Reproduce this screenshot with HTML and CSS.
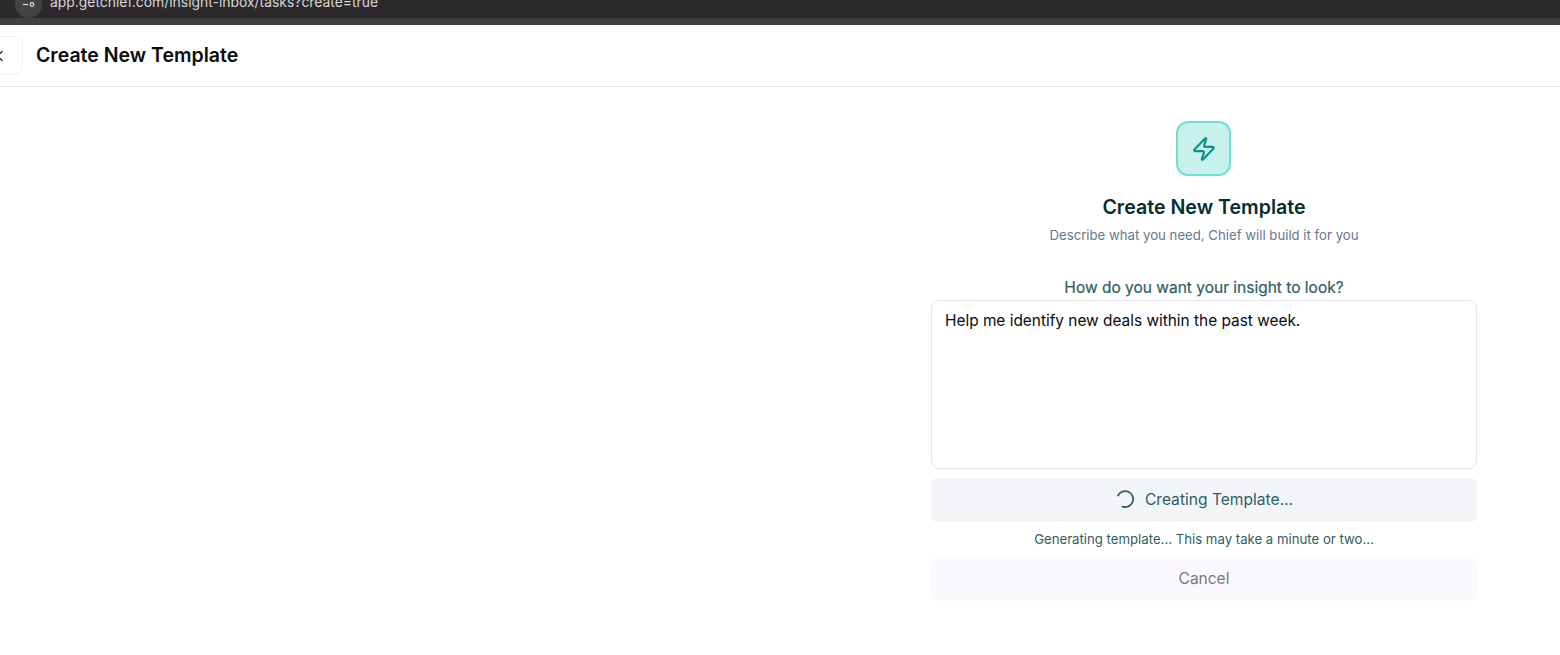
FILE: index.html
```html
<!DOCTYPE html>
<html lang="en">
<head>
    <meta charset="UTF-8">
    <title>Create New Template</title>
    <link rel="stylesheet" href="styles.css">
</head>
<body>

<div class="browser-bar">
    <div class="address-row">
        <div class="site-icon">
            <svg width="14" height="8" viewBox="0 0 14 8" fill="none" stroke="#e4e4e4" stroke-width="1.2">
                <path d="M1 4.500h5"/>
                <circle cx="10" cy="4.500" r="1.800"/>
            </svg>
        </div>
        <span class="address-text">app.getchief.com/insight-inbox/tasks?create=true</span>
    </div>
</div>

<div class="header">
    <button class="back-button">
        <svg width="10" height="12" viewBox="0 0 10 12" fill="none" stroke="#222" stroke-width="1.4" stroke-linecap="round" stroke-linejoin="round">
            <path d="M7 1.500L2.500 6 7 10.500"/>
        </svg>
    </button>
    <h1 class="header-title">Create New Template</h1>
</div>

<div class="main">
    <div class="form-panel">
        <div class="bolt-box">
            <svg width="26" height="26" viewBox="0 0 24 24" fill="none" stroke="#0d9488" stroke-width="2" stroke-linecap="round" stroke-linejoin="round">
                <path d="M4 14a1 1 0 0 1-.78-1.630l9.900-10.200a.500.500 0 0 1 .860.460l-1.920 6.020A1 1 0 0 0 13 10h7a1 1 0 0 1 .780 1.630l-9.900 10.200a.500.500 0 0 1-.860-.460l1.920-6.020A1 1 0 0 0 11 14z"/>
            </svg>
        </div>
        <h2 class="panel-title">Create New Template</h2>
        <p class="panel-sub">Describe what you need, Chief will build it for you</p>
        <label class="prompt-label" for="prompt">How do you want your insight to look?</label>
        <textarea class="prompt-box" id="prompt">Help me identify new deals within the past week.</textarea>
        <button class="creating-button">
            <svg class="spinner" width="20" height="20" viewBox="0 0 20 20" fill="none" stroke="#2f5d62" stroke-width="1.800" stroke-linecap="round">
                <path d="M3 6.500A8 8 0 1 1 7.500 17.600"/>
            </svg>
            Creating Template...
        </button>
        <p class="status-text">Generating template... This may take a minute or two...</p>
        <button class="cancel-button">Cancel</button>
    </div>
</div>

</body>
</html>
```

FILE: styles.css
```css
body {
    font-family: Inter, "Liberation Sans", sans-serif;
    background-color: #fff;
    margin: 0;
    height: 655px;
    overflow: hidden;
}
.browser-bar {
    height: 18px;
    background-color: #2b292b;
    border-bottom: 7px solid #403e40;
    overflow: hidden;
}
.address-row {
    display: flex;
    align-items: center;
    gap: 8px;
    padding-left: 15px;
    margin-top: -10px;
}
.site-icon {
    width: 27px;
    height: 28px;
    border-radius: 50%;
    background-color: #444244;
    display: flex;
    align-items: center;
    justify-content: center;
}
.address-text {
    font-size: 13.900px;
    color: #d6d6d6;
    margin-top: -5px;
}
.header {
    height: 61px;
    border-bottom: 1px solid #e5e5e8;
    display: flex;
    align-items: center;
    gap: 13px;
    margin-left: -18px;
}
.back-button {
    width: 41px;
    height: 39px;
    background-color: #fff;
    border: 1px solid #f0f0f4;
    border-radius: 8px;
    display: flex;
    align-items: center;
    justify-content: center;
    padding: 0 6px 0 0;
}
.header-title {
    font-size: 19.500px;
    font-weight: 600;
    line-height: 28px;
    color: #0a0a0f;
    margin: -2px 0 0;
}
.main {
    display: flex;
    justify-content: flex-end;
    padding: 34px 83px 0 0;
}
.form-panel {
    width: 546px;
    display: flex;
    flex-direction: column;
    align-items: center;
}
.bolt-box {
    width: 55px;
    height: 55px;
    box-sizing: border-box;
    margin-right: 1px;
    background-color: #c8f1ee;
    border: 2px solid #6fdfd6;
    border-radius: 12px;
    display: flex;
    align-items: center;
    justify-content: center;
}
.panel-title {
    font-size: 19.600px;
    font-weight: 600;
    line-height: 28px;
    color: #042f2e;
    margin: 17px 0 0;
}
.panel-sub {
    font-size: 13.200px;
    line-height: 20px;
    color: #64798c;
    margin: 4px 0 0;
}
.prompt-label {
    font-size: 15.500px;
    line-height: 20px;
    color: #2f5d62;
    margin-top: 33px;
    -webkit-text-stroke: 0.2px #2f5d62;
}
.prompt-box {
    width: 100%;
    height: 169px;
    box-sizing: border-box;
    margin-top: 2px;
    padding: 10px 13px;
    border: 1px solid #e6e6ec;
    border-radius: 8px;
    font-family: inherit;
    font-size: 15.400px;
    line-height: 20px;
    color: #0a0a0f;
    resize: none;
    outline: none;
}
.creating-button {
    width: 100%;
    height: 44px;
    margin-top: 9px;
    padding: 0 0 2px;
    background-color: #f4f5f9;
    border: none;
    border-radius: 6px;
    font-family: inherit;
    font-size: 15.600px;
    color: #2f5d62;
    display: flex;
    align-items: center;
    justify-content: center;
    gap: 10px;
}
.status-text {
    font-size: 13.200px;
    line-height: 18px;
    color: #2f5d62;
    margin: 8px 0 0;
}
.cancel-button {
    width: 100%;
    height: 44px;
    margin-top: 9px;
    padding: 0 0 2px;
    background-color: #fbf9fd;
    border: none;
    border-radius: 6px;
    font-family: inherit;
    font-size: 15.500px;
    color: #77777f;
}
```
